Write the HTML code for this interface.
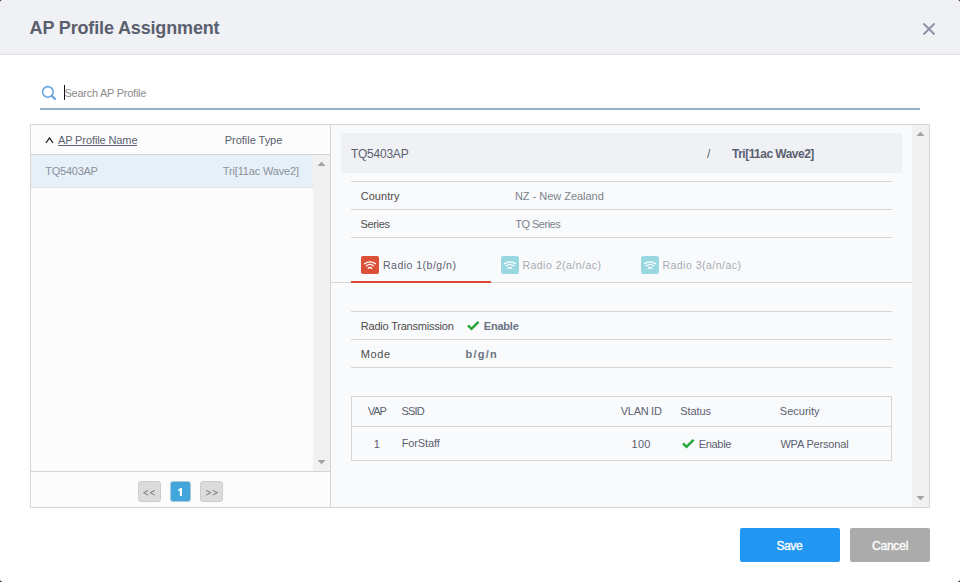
<!DOCTYPE html>
<html><head><meta charset="utf-8">
<style>
*{box-sizing:border-box;margin:0;padding:0}
html,body{width:960px;height:582px;overflow:hidden;background:#1e1e1e}
body{font-family:"Liberation Sans",sans-serif;position:relative}
.ab{position:absolute}
.tx{position:absolute;white-space:nowrap;line-height:1}
</style></head><body>
<div class="ab" style="left:0px;top:0px;width:960px;height:582px;background:#ffffff;border-radius:3px"></div>
<div class="ab" style="left:0px;top:0px;width:960px;height:54px;background:#f0f1f5;border-radius:3px 3px 0 0"></div>
<div class="ab" style="left:0px;top:54px;width:960px;height:1px;background:#e0e1e4"></div>
<svg class="ab" style="left:921px;top:21px" width="16" height="16" viewBox="0 0 16 16"><path d="M2.5 2.5L13.5 13.5M13.5 2.5L2.5 13.5" stroke="#8a90a2" stroke-width="1.8" fill="none"/></svg>
<svg class="ab" style="left:40px;top:84px" width="18" height="18" viewBox="0 0 18 18"><circle cx="7.9" cy="7.9" r="5.3" stroke="#68a5e2" stroke-width="1.6" fill="none"/><path d="M12 12L14.9 14.9" stroke="#68a5e2" stroke-width="2.2" stroke-linecap="round"/></svg>
<div class="ab" style="left:64px;top:85px;width:1px;height:15px;background:#111"></div>
<div class="ab" style="left:40px;top:108px;width:880px;height:2px;background:#97afc3"></div>
<div class="ab" style="left:30px;top:124px;width:301px;height:384px;background:#fcfcfc;border:1px solid #d5d5d5"></div>
<div class="ab" style="left:31px;top:154px;width:299px;height:1px;background:#d5d5d5"></div>
<svg class="ab" style="left:45px;top:136px" width="9" height="8" viewBox="0 0 9 8"><path d="M1 7L4.5 2L8 7" stroke="#222" stroke-width="1.3" fill="none"/></svg>
<div class="ab" style="left:58px;top:145px;width:79px;height:1px;background:#5b6170"></div>
<div class="ab" style="left:31px;top:155px;width:282px;height:32px;background:#e6f0f9"></div>
<div class="ab" style="left:31px;top:187px;width:282px;height:1px;background:#dce4eb"></div>
<div class="ab" style="left:313px;top:155px;width:17px;height:316px;background:#f1f1f1"></div>
<svg class="ab" style="left:317px;top:161px" width="9" height="6" viewBox="0 0 9 6"><path d="M0.5 5L4.5 0.8L8.5 5Z" fill="#a3a3a3"/></svg>
<svg class="ab" style="left:317px;top:459px" width="9" height="6" viewBox="0 0 9 6"><path d="M0.5 1L4.5 5.2L8.5 1Z" fill="#a3a3a3"/></svg>
<div class="ab" style="left:31px;top:471px;width:299px;height:1px;background:#d5d5d5"></div>
<div class="ab" style="left:138px;top:481px;width:23px;height:21px;background:#dcdcdc;border:1px solid #cdcdcd;border-radius:3px"></div>
<div class="ab" style="left:170px;top:481px;width:21px;height:21px;background:#42a6dd;border:1px solid #a9c9dc;border-radius:3px"></div>
<svg class="ab" style="left:170px;top:481px" width="21" height="21" viewBox="0 0 21 21"><path d="M9.9 7H12V15H9.9V9.6L8.1 10.6V8.9L10.2 7Z" fill="#fff"/></svg>
<div class="ab" style="left:200px;top:481px;width:23px;height:21px;background:#dcdcdc;border:1px solid #cdcdcd;border-radius:3px"></div>
<svg class="ab" style="left:138px;top:481px" width="23" height="21" viewBox="0 0 23 21"><path d="M10.2 9.4L5.6 11.7L10.2 14M16.8 9.4L12.2 11.7L16.8 14" stroke="#777" stroke-width="1" fill="none"/></svg>
<svg class="ab" style="left:200px;top:481px" width="23" height="21" viewBox="0 0 23 21"><path d="M6.2 9.4L10.8 11.7L6.2 14M12.8 9.4L17.4 11.7L12.8 14" stroke="#777" stroke-width="1" fill="none"/></svg>
<div class="ab" style="left:330px;top:124px;width:600px;height:384px;background:#f9fafc;border:1px solid #d5d5d5"></div>
<div class="ab" style="left:912px;top:125px;width:17px;height:382px;background:#f1f1f1"></div>
<svg class="ab" style="left:916px;top:131px" width="9" height="6" viewBox="0 0 9 6"><path d="M0.5 5L4.5 0.8L8.5 5Z" fill="#a3a3a3"/></svg>
<svg class="ab" style="left:916px;top:495px" width="9" height="6" viewBox="0 0 9 6"><path d="M0.5 1L4.5 5.2L8.5 1Z" fill="#a3a3a3"/></svg>
<div class="ab" style="left:341px;top:133px;width:561px;height:40px;background:#f0f1f5"></div>
<div class="ab" style="left:351px;top:181px;width:541px;height:1px;background:#d6d6d6"></div>
<div class="ab" style="left:351px;top:209px;width:541px;height:1px;background:#d6d6d6"></div>
<div class="ab" style="left:351px;top:237px;width:541px;height:1px;background:#d6d6d6"></div>
<div class="ab" style="left:351px;top:311px;width:541px;height:1px;background:#d6d6d6"></div>
<div class="ab" style="left:351px;top:339px;width:541px;height:1px;background:#d6d6d6"></div>
<div class="ab" style="left:351px;top:367px;width:541px;height:1px;background:#d6d6d6"></div>
<div class="ab" style="left:361px;top:256px;width:18px;height:18px;background:#db5039;border-radius:2px"></div><svg class="ab" style="left:361px;top:256px" width="18" height="18" viewBox="0 0 18 18"><g stroke="#fff" stroke-width="1.3" fill="none" stroke-linecap="round"><path d="M3.4 7.7Q9 3.9 14.6 7.7"/><path d="M5.4 9.9Q9 7.0 12.6 9.9"/><path d="M7.3 12.3Q9 10.7 10.7 12.3"/></g></svg>
<div class="ab" style="left:501px;top:256px;width:18px;height:18px;background:#9ad8e1;border-radius:2px"></div><svg class="ab" style="left:501px;top:256px" width="18" height="18" viewBox="0 0 18 18"><g stroke="#fff" stroke-width="1.3" fill="none" stroke-linecap="round"><path d="M3.4 7.7Q9 3.9 14.6 7.7"/><path d="M5.4 9.9Q9 7.0 12.6 9.9"/><path d="M7.3 12.3Q9 10.7 10.7 12.3"/></g></svg>
<div class="ab" style="left:641px;top:256px;width:18px;height:18px;background:#9ad8e1;border-radius:2px"></div><svg class="ab" style="left:641px;top:256px" width="18" height="18" viewBox="0 0 18 18"><g stroke="#fff" stroke-width="1.3" fill="none" stroke-linecap="round"><path d="M3.4 7.7Q9 3.9 14.6 7.7"/><path d="M5.4 9.9Q9 7.0 12.6 9.9"/><path d="M7.3 12.3Q9 10.7 10.7 12.3"/></g></svg>
<div class="ab" style="left:331px;top:282px;width:581px;height:1px;background:#d6d6d6"></div>
<div class="ab" style="left:351px;top:281px;width:140px;height:2px;background:#d9492f"></div>
<svg class="ab" style="left:467px;top:321px" width="13" height="10" viewBox="0 0 13 10"><path d="M1 4.4L4.5 7.8L11.6 0.9" stroke="#23a63a" stroke-width="2.5" fill="none"/></svg>
<div class="ab" style="left:351px;top:396px;width:541px;height:65px;border:1px solid #d6d6d6"></div>
<div class="ab" style="left:352px;top:426px;width:539px;height:1px;background:#d6d6d6"></div>
<svg class="ab" style="left:682px;top:439px" width="13" height="10" viewBox="0 0 13 10"><path d="M1 4.4L4.5 7.8L11.6 0.9" stroke="#23a63a" stroke-width="2.5" fill="none"/></svg>
<div class="ab" style="left:740px;top:528px;width:100px;height:34px;background:#2196f3;border-radius:2px"></div>
<div class="ab" style="left:850px;top:528px;width:80px;height:34px;background:#ababab;border-radius:2px"></div>
<div id="title" class="tx" style="left:29.55px;top:19px;font-size:18.00px;letter-spacing:-0.150px;font-weight:bold;color:#5a606e;">AP Profile Assignment</div>
<div id="search" class="tx" style="left:64.53px;top:88px;font-size:11.00px;letter-spacing:-0.258px;font-weight:normal;color:#8c8c8c;">Search AP Profile</div>
<div id="apname" class="tx" style="left:57.92px;top:135px;font-size:11.00px;letter-spacing:-0.105px;font-weight:normal;color:#5b6170;">AP Profile Name</div>
<div id="ptype" class="tx" style="left:224.79px;top:135px;font-size:11.00px;letter-spacing:-0.033px;font-weight:normal;color:#5b6170;">Profile Type</div>
<div id="row1" class="tx" style="left:45.37px;top:166px;font-size:11.00px;letter-spacing:-0.264px;font-weight:normal;color:#8c919b;">TQ5403AP</div>
<div id="row1t" class="tx" style="left:222.87px;top:166px;font-size:11.00px;letter-spacing:-0.163px;font-weight:normal;color:#8c919b;">Tri[11ac Wave2]</div>
<div id="rhname" class="tx" style="left:350.92px;top:148px;font-size:12.00px;letter-spacing:-0.233px;font-weight:normal;color:#5b6170;">TQ5403AP</div>
<div id="rhslash" class="tx" style="left:706.96px;top:148px;font-size:12.00px;letter-spacing:0.000px;font-weight:normal;color:#5b6170;">/</div>
<div id="rhtype" class="tx" style="left:732.09px;top:148px;font-size:12.00px;letter-spacing:-0.527px;font-weight:bold;color:#5b6170;">Tri[11ac Wave2]</div>
<div id="country" class="tx" style="left:360.63px;top:191px;font-size:11.00px;letter-spacing:0.058px;font-weight:normal;color:#4c4c4c;">Country</div>
<div id="nz" class="tx" style="left:514.88px;top:191px;font-size:11.00px;letter-spacing:-0.021px;font-weight:normal;color:#7d828c;">NZ - New Zealand</div>
<div id="series" class="tx" style="left:360.52px;top:219px;font-size:11.00px;letter-spacing:-0.350px;font-weight:normal;color:#4c4c4c;">Series</div>
<div id="tqs" class="tx" style="left:515.20px;top:219px;font-size:11.00px;letter-spacing:-0.498px;font-weight:normal;color:#7d828c;">TQ Series</div>
<div id="tab1" class="tx" style="left:383.02px;top:260px;font-size:10.50px;letter-spacing:0.487px;font-weight:normal;color:#5b6170;">Radio 1(b/g/n)</div>
<div id="tab2" class="tx" style="left:522.41px;top:260px;font-size:10.50px;letter-spacing:0.481px;font-weight:normal;color:#a6aab2;">Radio 2(a/n/ac)</div>
<div id="tab3" class="tx" style="left:662.41px;top:260px;font-size:10.50px;letter-spacing:0.481px;font-weight:normal;color:#a6aab2;">Radio 3(a/n/ac)</div>
<div id="rtx" class="tx" style="left:360.84px;top:321px;font-size:11.00px;letter-spacing:-0.216px;font-weight:normal;color:#4c4c4c;">Radio Transmission</div>
<div id="rten" class="tx" style="left:483.81px;top:321px;font-size:11.00px;letter-spacing:-0.212px;font-weight:bold;color:#6d7282;">Enable</div>
<div id="mode" class="tx" style="left:360.79px;top:349px;font-size:11.00px;letter-spacing:0.619px;font-weight:normal;color:#4c4c4c;">Mode</div>
<div id="bgn" class="tx" style="left:465.58px;top:349px;font-size:11.00px;letter-spacing:1.195px;font-weight:bold;color:#6d7282;">b/g/n</div>
<div id="vap" class="tx" style="left:367.80px;top:406px;font-size:11.00px;letter-spacing:-1.066px;font-weight:normal;color:#5b6170;">VAP</div>
<div id="ssid" class="tx" style="left:401.39px;top:406px;font-size:11.00px;letter-spacing:-0.753px;font-weight:normal;color:#5b6170;">SSID</div>
<div id="vlan" class="tx" style="left:620.80px;top:406px;font-size:11.00px;letter-spacing:-0.293px;font-weight:normal;color:#5b6170;">VLAN ID</div>
<div id="status" class="tx" style="left:680.29px;top:406px;font-size:11.00px;letter-spacing:-0.114px;font-weight:normal;color:#5b6170;">Status</div>
<div id="sec" class="tx" style="left:779.83px;top:406px;font-size:11.00px;letter-spacing:-0.005px;font-weight:normal;color:#5b6170;">Security</div>
<div id="one" class="tx" style="left:373.74px;top:439px;font-size:11.00px;letter-spacing:0.000px;font-weight:normal;color:#5b6170;">1</div>
<div id="forstaff" class="tx" style="left:401.64px;top:438px;font-size:11.00px;letter-spacing:-0.090px;font-weight:normal;color:#5b6170;">ForStaff</div>
<div id="hundred" class="tx" style="left:631.58px;top:439px;font-size:11.00px;letter-spacing:0.188px;font-weight:normal;color:#5b6170;">100</div>
<div id="enable2" class="tx" style="left:698.80px;top:439px;font-size:11.00px;letter-spacing:-0.334px;font-weight:normal;color:#5b6170;">Enable</div>
<div id="wpa" class="tx" style="left:780.42px;top:439px;font-size:11.00px;letter-spacing:-0.174px;font-weight:normal;color:#5b6170;">WPA Personal</div>
<div id="save" class="tx" style="left:776.49px;top:540px;font-size:12.00px;letter-spacing:-0.419px;font-weight:normal;color:#ffffff;-webkit-text-stroke:0.35px #fff">Save</div>
<div id="cancel" class="tx" style="left:871.98px;top:540px;font-size:12.00px;letter-spacing:-0.206px;font-weight:normal;color:#ffffff;-webkit-text-stroke:0.35px #fff">Cancel</div>
</body></html>
